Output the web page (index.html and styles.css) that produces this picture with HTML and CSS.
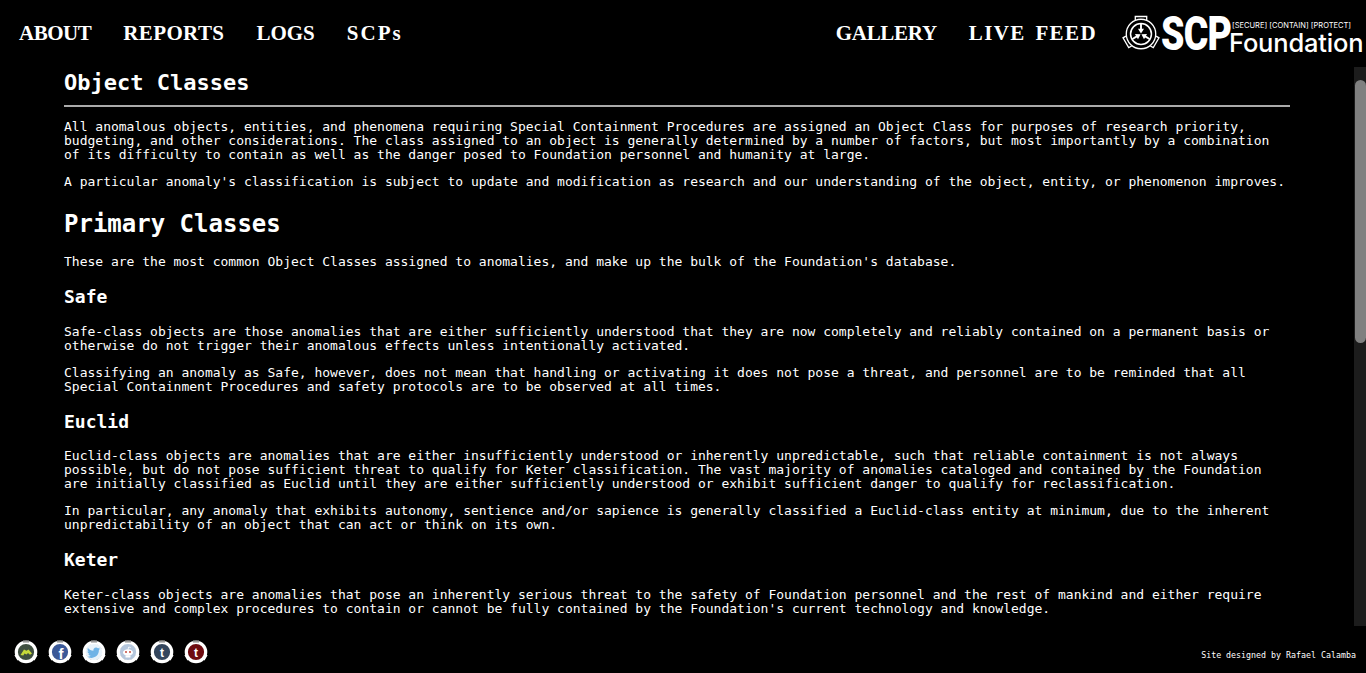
FILE: index.html
```html
<html>
    <head>
        <title>SCP Foundation - Object Classes</title>
        <link rel="stylesheet" href="styles.css">
    </head>
    <body>
        <svg class="defs" width="0" height="0">
            <symbol id="badgeShell" viewBox="0 0 26 26">
                <circle cx="13" cy="13" r="9.7" fill="none" stroke="#fff" stroke-width="3.2"/>
                <path d="M10 3.6V1.4h6v2.2z" fill="#999"/>
                <path d="M10 3.6V1.4h6v2.2z" fill="#fff" transform="rotate(120 13 13)"/>
                <path d="M10 3.6V1.4h6v2.2z" fill="#fff" transform="rotate(240 13 13)"/>
            </symbol>
            <symbol id="logoArm" viewBox="0 0 40 40" overflow="visible">
                <path d="M14 5.2V1.6h12v3.6" fill="none" stroke="#fff" stroke-width="1.4"/>
                <path d="M20 9.5v6" stroke="#fff" stroke-width="2"/>
                <path d="M16.8 14.5h6.4L20 19.5z" fill="#fff"/>
            </symbol>
        </svg>

        <div class="nav">
            <div class="navLinks">
                <a href="#" class="about">ABOUT</a>
                <a href="#" class="reports">REPORTS</a>
                <a href="#">LOGS</a>
                <a href="#" class="scps">SCPs</a>
            </div>
            <div class="navRight">
                <div class="navLinks">
                    <a href="#" class="gallery">GALLERY</a>
                    <a href="#" class="liveFeed">LIVE FEED</a>
                </div>
                <div class="logo">
                    <svg class="logoMark" viewBox="0 0 40 40" width="38" height="38">
                        <circle cx="20" cy="20" r="15.5" fill="none" stroke="#fff" stroke-width="1.4"/>
                        <circle cx="20" cy="20" r="11" fill="none" stroke="#fff" stroke-width="1.6"/>
                        <use href="#logoArm" width="40" height="40"/>
                        <use href="#logoArm" width="40" height="40" transform="rotate(120 20 20)"/>
                        <use href="#logoArm" width="40" height="40" transform="rotate(240 20 20)"/>
                    </svg>
                    <div class="logoScp">SCP</div>
                    <div class="logoText">
                        <div class="logoTag">[SECURE] [CONTAIN] [PROTECT]</div>
                        <div class="logoName">Foundation</div>
                    </div>
                </div>
            </div>
        </div>

        <div class="main">
            <div class="content">
                <h2 class="pageTitle">Object Classes</h2>
                <p>All anomalous objects, entities, and phenomena requiring Special Containment Procedures are assigned an Object Class for purposes of research priority, budgeting, and other considerations. The class assigned to an object is generally determined by a number of factors, but most importantly by a combination of its difficulty to contain as well as the danger posed to Foundation personnel and humanity at large.</p>
                <p>A particular anomaly's classification is subject to update and modification as research and our understanding of the object, entity, or phenomenon improves.</p>

                <h1>Primary Classes</h1>
                <p>These are the most common Object Classes assigned to anomalies, and make up the bulk of the Foundation's database.</p>

                <h3>Safe</h3>
                <p>Safe-class objects are those anomalies that are either sufficiently understood that they are now completely and reliably contained on a permanent basis or otherwise do not trigger their anomalous effects unless intentionally activated.</p>
                <p>Classifying an anomaly as Safe, however, does not mean that handling or activating it does not pose a threat, and personnel are to be reminded that all Special Containment Procedures and safety protocols are to be observed at all times.</p>

                <h3>Euclid</h3>
                <p>Euclid-class objects are anomalies that are either insufficiently understood or inherently unpredictable, such that reliable containment is not always possible, but do not pose sufficient threat to qualify for Keter classification. The vast majority of anomalies cataloged and contained by the Foundation are initially classified as Euclid until they are either sufficiently understood or exhibit sufficient danger to qualify for reclassification.</p>
                <p>In particular, any anomaly that exhibits autonomy, sentience and/or sapience is generally classified a Euclid-class entity at minimum, due to the inherent unpredictability of an object that can act or think on its own.</p>

                <h3>Keter</h3>
                <p>Keter-class objects are anomalies that pose an inherently serious threat to the safety of Foundation personnel and the rest of mankind and either require extensive and complex procedures to contain or cannot be fully contained by the Foundation's current technology and knowledge.</p>
            </div>
            <div class="scrollTrack"><div class="scrollThumb"></div></div>
        </div>

        <div class="footer">
            <div class="social">
                <svg class="badge" viewBox="0 0 26 26" width="26" height="26">
                    <circle cx="13" cy="13" r="8.5" fill="#3f4f40"/>
                    <path d="M7.5 16l3.5-5.5 2.5 1.2 2-1.2 3.5 4-2 1.2-2-1.6-1.5 1.4-2-1-1.2 2z" fill="#c6d93a"/>
                    <use href="#badgeShell" width="26" height="26"/>
                </svg>
                <svg class="badge" viewBox="0 0 26 26" width="26" height="26">
                    <circle cx="13" cy="13" r="8.5" fill="#3b5998"/>
                    <text x="14" y="20" class="badgeLetter">f</text>
                    <use href="#badgeShell" width="26" height="26"/>
                </svg>
                <svg class="badge" viewBox="0 0 26 26" width="26" height="26">
                    <circle cx="13" cy="13" r="8.5" fill="#e8f2fa"/>
                    <path d="M19 9.6c-.5.2-1 .4-1.500.4.600-.3 1-.8 1.200-1.400-.5.3-1.100.5-1.700.7a2.700 2.700 0 0 0-4.600 2.400c-2.200-.1-4.200-1.200-5.500-2.800-.7 1.200-.4 2.800.8 3.600-.4 0-.8-.1-1.200-.3 0 1.300.9 2.400 2.100 2.700-.4.1-.8.100-1.200 0 .3 1.100 1.300 1.800 2.500 1.900-1.100.8-2.400 1.100-3.800 1 4 2.500 11.800 1 11.800-6.700.5-.4.9-.9 1.300-1.500z" fill="#6fb3e6"/>
                    <use href="#badgeShell" width="26" height="26"/>
                </svg>
                <svg class="badge" viewBox="0 0 26 26" width="26" height="26">
                    <circle cx="13" cy="13" r="8.5" fill="#b4c6dc"/>
                    <ellipse cx="13" cy="13.500" rx="5" ry="3.200" fill="#fff"/>
                    <circle cx="11" cy="13" r=".9" fill="#c0392b"/>
                    <circle cx="15" cy="13" r=".9" fill="#c0392b"/>
                    <path d="M13 10.500l.7-2.500 2 .5" fill="none" stroke="#fff" stroke-width=".8"/>
                    <path d="M10.500 16.500h5v2h-5z" fill="#fff"/>
                    <use href="#badgeShell" width="26" height="26"/>
                </svg>
                <svg class="badge" viewBox="0 0 26 26" width="26" height="26">
                    <circle cx="13" cy="13" r="8.5" fill="#34465d"/>
                    <text x="13" y="17.500" class="badgeLetter small">t</text>
                    <use href="#badgeShell" width="26" height="26"/>
                </svg>
                <svg class="badge" viewBox="0 0 26 26" width="26" height="26">
                    <circle cx="13" cy="13" r="8.5" fill="#6e0b10"/>
                    <text x="13" y="17.500" class="badgeLetter small">t</text>
                    <use href="#badgeShell" width="26" height="26"/>
                </svg>
            </div>
            <div class="credit">Site designed by Rafael Calamba</div>
        </div>
    </body>
</html>
```

FILE: styles.css
```css
html, body{
    height: 100%;
}

body{
    margin: 0;
    background: #000;
    color: white;
    font-family: 'DejaVu Sans Mono', monospace;
    display: flex;
    flex-direction: column;
    overflow: hidden;
}

.defs{
    position: absolute;
}

.nav{
    height: 67px;
    flex: none;
    display: flex;
    justify-content: space-between;
    align-items: center;
    padding: 0 2px 0 19px;
}

.navLinks{
    display: flex;
    gap: 32px;
}

.navLinks a{
    color: white;
    text-decoration: none;
    font-family: 'Liberation Serif', serif;
    font-weight: bold;
    font-size: 21px;
    white-space: nowrap;
}

.navLinks .about{
    letter-spacing: -0.5px;
}

.navLinks .reports{
    letter-spacing: 0.4px;
}

.navLinks .scps{
    letter-spacing: 2px;
}

.navLinks .gallery{
    letter-spacing: -0.3px;
}

.navLinks .liveFeed{
    letter-spacing: 1.4px;
    word-spacing: 3px;
}

.navRight{
    display: flex;
    align-items: center;
    gap: 25px;
}

.logo{
    display: flex;
    align-items: center;
    width: 242px;
    height: 40px;
}

.logoMark{
    flex: none;
}

.logoScp{
    flex: none;
    width: 68px;
    margin-left: 1px;
    font-family: 'Roboto', sans-serif;
    font-weight: 900;
    font-size: 48px;
    line-height: 42px;
    letter-spacing: -1px;
    transform: scaleX(0.78);
    transform-origin: left center;
}

.logoText{
    flex: none;
    padding-top: 8px;
}

.logoTag{
    font-family: 'Inter', sans-serif;
    font-size: 7.5px;
    line-height: 9px;
    padding-left: 3px;
    white-space: nowrap;
}

.logoName{
    font-family: 'Inter', sans-serif;
    font-weight: 500;
    font-size: 25.5px;
    line-height: 25px;
    letter-spacing: -0.2px;
}

.main{
    flex: 1;
    min-height: 0;
    display: flex;
    overflow: hidden;
}

.content{
    flex: 1;
    min-width: 0;
    padding: 0 64px;
}

.scrollTrack{
    flex: none;
    width: 12px;
    background: #1c1c1c;
    padding: 13px 0 0 1px;
    box-sizing: border-box;
}

.scrollThumb{
    height: 263px;
    background: #808080;
    border-radius: 6px;
}

p{
    font-size: 13px;
    line-height: 14px;
    margin: 0 0 13px 0;
}

h1{
    font-size: 24px;
    line-height: 28px;
    margin: 21px 0 17px 0;
}

h2{
    font-size: 22px;
    margin: 0;
}

.pageTitle{
    line-height: 30px;
    padding: 1px 0 7px 0;
    border-bottom: 2px solid #aaa;
    margin-bottom: 13px;
}

h3{
    font-size: 18px;
    line-height: 20px;
    margin: 18px 0 17.5px 0;
}

.footer{
    height: 47px;
    flex: none;
    display: flex;
    justify-content: space-between;
    padding: 3px 10px 0 13px;
    box-sizing: border-box;
}

.social{
    display: flex;
    gap: 8px;
    padding-top: 10px;
}

.badgeLetter{
    fill: white;
    font-family: 'Liberation Sans', sans-serif;
    font-weight: bold;
    font-size: 15px;
    text-anchor: middle;
}

.badgeLetter.small{
    font-size: 12px;
}

.credit{
    font-size: 8.3px;
    margin-top: 21px;
}
```
